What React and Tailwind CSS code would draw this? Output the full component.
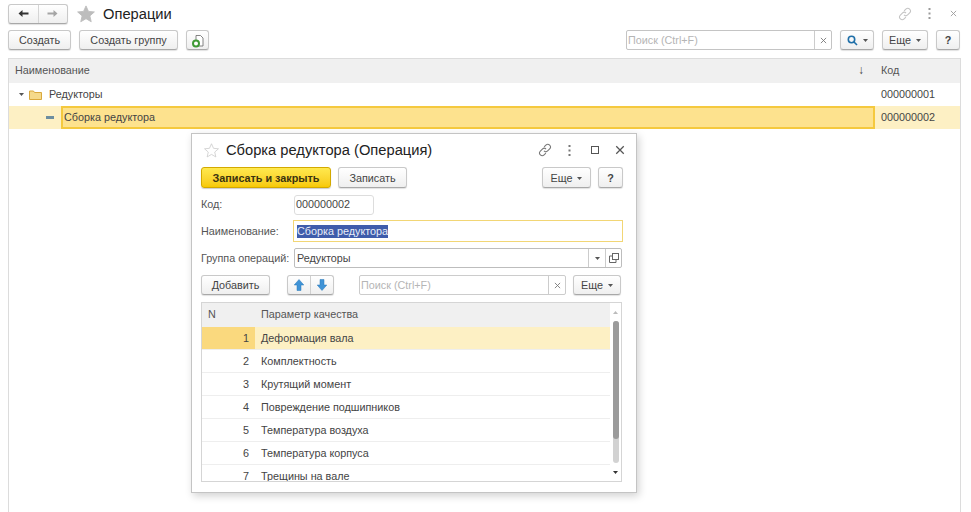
const FONT = "font-['Liberation_Sans',Arial,sans-serif]";

function Btn({ children, className = "" }) {
  return (
    <div className={`flex items-center justify-center rounded-[3px] border border-[#c9c9c9] border-b-[#a8a8a8] bg-gradient-to-b from-white to-[#efefef] pt-[1px] text-[10.8px] text-[#444] shadow-[0_1px_1px_rgba(0,0,0,0.12)] ${className}`}>
      {children}
    </div>
  );
}

const Caret = ({ className = "" }) => (
  <svg width="5" height="3" viewBox="0 0 5 3" className={className}><path d="M0 0h5L2.5 3z" fill="#555" /></svg>
);

const Close = ({ size = 7, color = "#777" }) => (
  <svg width={size} height={size} viewBox="0 0 8 8"><path d="M1 1l6 6M7 1L1 7" stroke={color} strokeWidth="1" fill="none" /></svg>
);

const LinkIcon = ({ color, size = 14 }) => (
  <svg width={size} height={size} viewBox="0 0 16 16" fill="none" stroke={color} strokeWidth="1.2">
    <path d="M7 4.5l2-2a3 3 0 0 1 4.3 4.3l-2.3 2.3a3 3 0 0 1-4.2 0" />
    <path d="M9 11.5l-2 2a3 3 0 0 1-4.3-4.3L5 6.9a3 3 0 0 1 4.2 0" />
  </svg>
);

const Dots = ({ color }) => (
  <svg width="3" height="11" viewBox="0 0 3 11"><rect x="0.5" y="0" width="2" height="2" fill={color} /><rect x="0.5" y="4.5" width="2" height="2" fill={color} /><rect x="0.5" y="9" width="2" height="2" fill={color} /></svg>
);

const Star = ({ size, fill, stroke }) => (
  <svg width={size} height={size} viewBox="0 0 20 20"><path d="M10 1l2.7 6.1 6.600.6-5 4.400 1.500 6.500L10 15.200l-5.800 3.400 1.500-6.500-5-4.400 6.600-.6z" fill={fill} stroke={stroke} strokeWidth="1" strokeLinejoin="round" /></svg>
);

const Arrow = ({ dir, color }) => (
  <svg width="11" height="9" viewBox="0 0 11 9">
    {dir === "left"
      ? <path d="M0.5 4.5L4.5 1v2.500h6v2h-6V8z" fill={color} />
      : <path d="M10.5 4.5L6.5 1v2.500h-6v2h6V8z" fill={color} />}
  </svg>
);

const BlueArrow = ({ down }) => (
  <svg width="10" height="12" viewBox="0 0 10 12" className={down ? "rotate-180" : ""}>
    <path d="M5 .5L9.8 6H7v5.500H3V6H.2z" fill="#3f93d6" stroke="#2a78b8" strokeWidth="0.5" />
  </svg>
);

const rows = ["Деформация вала", "Комплектность", "Крутящий момент", "Повреждение подшипников", "Температура воздуха", "Температура корпуса", "Трещины на вале"];

function Modal() {
  return (
    <div className="absolute left-[191px] top-[133px] flex h-[360px] w-[446px] flex-col border border-[#c4c4c4] bg-white pl-[9px] pr-[13px] shadow-[2px_3px_8px_rgba(0,0,0,0.18)]">
      <div className="flex h-[31px] items-center pt-[1px]">
        <div className="ml-[3px] flex w-[22px]"><Star size={15} fill="#fff" stroke="#c8c8c8" /></div>
        <span className="text-[14.7px] leading-none text-[#222]">Сборка редуктора (Операция)</span>
        <div className="ml-auto flex items-center">
          <LinkIcon color="#777" />
          <span className="ml-[16px]"><Dots color="#777" /></span>
          <span className="ml-[20px] block h-[8px] w-[8px] border border-[#555]" />
          <span className="ml-[16px] mr-[-2px]"><Close size={10} color="#555" /></span>
        </div>
      </div>
      <div className="mt-[2px] flex items-center">
        <div className="flex h-[21px] w-[130px] items-center justify-center rounded-[3px] border border-[#d3a900] bg-gradient-to-b from-[#ffe94d] to-[#f7c900] pt-[1px] text-[10.8px] font-bold text-[#3a3310] shadow-[0_1px_1px_rgba(0,0,0,0.2)]">Записать и закрыть</div>
        <Btn className="ml-[7px] h-[21px] w-[69px]">Записать</Btn>
        <Btn className="ml-auto h-[21px] w-[49px] gap-[5px]">Еще<Caret /></Btn>
        <Btn className="ml-[7px] h-[21px] w-[25px] font-bold">?</Btn>
      </div>
      <div className="mt-[7px] flex h-[20px] items-center">
        <span className="w-[93px] pb-[1px] text-[10.8px] text-[#555]">Код:</span>
        <div className="flex h-[20px] w-[80px] items-center rounded-[3px] border border-[#ddd] px-[1px] pb-[1px] text-[10.8px] text-[#444]">000000002</div>
      </div>
      <div className="mt-[5px] flex h-[22px] items-center">
        <span className="w-[92px] text-[10.8px] text-[#555]">Наименование:</span>
        <div className="flex h-[22px] flex-1 items-center border border-[#f2d675] px-[3px] text-[10.8px]">
          <span className="bg-[#3f5cab] leading-[13px] text-[#e8ecf8]">Сборка редуктора</span>
        </div>
      </div>
      <div className="mt-[6px] flex h-[20px] items-center">
        <span className="w-[93px] whitespace-nowrap text-[10.8px] text-[#555]">Группа операций:</span>
        <div className="mr-[1px] flex h-[20px] flex-1 items-center rounded-[2px] border border-[#bdbdbd] pl-[2px] text-[10.8px] text-[#444]">
          Редукторы
          <div className="ml-auto flex h-full w-[17px] items-center justify-center border-l border-[#ccc]"><Caret /></div>
          <div className="flex h-full w-[16px] items-center justify-center border-l border-[#ccc]">
            <svg width="10" height="10" viewBox="0 0 10 10" fill="none" stroke="#666"><rect x="3.5" y=".5" width="6" height="6" /><path d="M3 3H.5v6.500H7V7" /></svg>
          </div>
        </div>
      </div>
      <div className="mt-[7px] flex items-center">
        <Btn className="h-[20px] w-[69px]">Добавить</Btn>
        <div className="ml-[17px] flex h-[20px] w-[47px] rounded-[3px] border border-[#c9c9c9] border-b-[#a8a8a8] bg-gradient-to-b from-white to-[#efefef] shadow-[0_1px_1px_rgba(0,0,0,0.12)]">
          <div className="flex flex-1 items-center justify-center border-r border-[#d0d0d0]"><BlueArrow /></div>
          <div className="flex flex-1 items-center justify-center"><BlueArrow down /></div>
        </div>
        <div className="ml-[25px] flex h-[20px] w-[207px] items-center rounded-[2px] border border-[#ccc] pl-[1px] text-[10.8px] text-[#b5b5b5]">
          Поиск (Ctrl+F)
          <div className="ml-auto flex h-full w-[17px] items-center justify-center border-l border-[#ccc]"><Close /></div>
        </div>
        <Btn className="ml-[7px] h-[20px] w-[48px] gap-[5px]">Еще<Caret /></Btn>
      </div>
      <div className="mt-[7px] flex h-[180px] w-[421px] overflow-hidden border border-[#d5d5d5]">
        <div className="min-w-0 flex-1">
          <div className="flex h-[24px] items-center bg-[#f0f0f0] pb-[2px] text-[10.8px] text-[#555]">
            <span className="w-[53px] pl-[6px]">N</span>
            <span className="pl-[6px]">Параметр качества</span>
          </div>
          {rows.map((r, i) => (
            <div key={r} className={`flex h-[23px] shrink-0 items-center border-b border-[#eeeeee] text-[10.8px] text-[#444] ${i === 0 ? "bg-[#fdf0c4]" : ""}`}>
              <span className={`flex h-full w-[53px] items-center justify-end pr-[6px] ${i === 0 ? "bg-[#fad97e]" : ""}`}>{i + 1}</span>
              <span className="pl-[6px]">{r}</span>
            </div>
          ))}
        </div>
        <div className="flex w-[11px] flex-col items-center">
          <svg width="5" height="3" viewBox="0 0 5 3" className="mt-[8px]"><path d="M0 3h5L2.5 0z" fill="#bbb" /></svg>
          <div className="mt-[7px] h-[142px] w-[6px] rounded-[3px] bg-[#d2d2d2]">
            <div className="h-[118px] rounded-[3px] bg-[#9b9b9b]" />
          </div>
          <svg width="5" height="3" viewBox="0 0 5 3" className="mt-[8px]"><path d="M0 0h5L2.5 3z" fill="#333" /></svg>
        </div>
      </div>
    </div>
  );
}

export default function App() {
  return (
    <div className={`relative h-[512px] w-[971px] overflow-hidden bg-white ${FONT}`}>
      <div className="flex h-[30px] items-center pl-[8px] pr-[14px]">
        <div className="mt-[-3px] flex h-[20px] w-[60px] rounded-[3px] border border-[#c9c9c9] border-b-[#a8a8a8] bg-gradient-to-b from-white to-[#efefef] shadow-[0_1px_1px_rgba(0,0,0,0.12)]">
          <div className="flex flex-1 items-center justify-center border-r border-[#d5d5d5]"><Arrow dir="left" color="#333" /></div>
          <div className="flex flex-1 items-center justify-center"><Arrow dir="right" color="#a5a5a5" /></div>
        </div>
        <div className="ml-[9px] mt-[-3px] flex w-[26px]"><Star size={18} fill="#bdbdbd" stroke="#bdbdbd" /></div>
        <span className="mt-[-1px] text-[14.7px] leading-none text-[#222]">Операции</span>
        <div className="ml-auto mt-[-3px] flex items-center">
          <LinkIcon color="#c4c4c4" />
          <span className="ml-[16px]"><Dots color="#9a9a9a" /></span>
          <span className="ml-[19px]"><Close color="#9a9a9a" /></span>
        </div>
      </div>
      <div className="flex h-[28px] items-start pl-[8px] pr-[11px]">
        <Btn className="h-[20px] w-[63px]">Создать</Btn>
        <Btn className="ml-[8px] h-[20px] w-[99px]">Создать группу</Btn>
        <Btn className="ml-[8px] h-[20px] w-[23px]">
          <svg width="14" height="14" viewBox="0 0 14 14">
            <path d="M5 1.5h4.500L12 4v8H5z" fill="#fff" stroke="#666" strokeWidth="0.8" />
            <circle cx="5" cy="9.5" r="3" fill="#fff" stroke="#3f9a35" strokeWidth="2" />
          </svg>
        </Btn>
        <div className="ml-auto flex h-[20px] w-[206px] items-center rounded-[2px] border border-[#c4c4c4] pl-[1px] text-[10.8px] text-[#b5b5b5]">
          Поиск (Ctrl+F)
          <div className="ml-auto flex h-full w-[17px] items-center justify-center border-l border-[#ccc]"><Close /></div>
        </div>
        <Btn className="ml-[8px] h-[20px] w-[34px] gap-[5px]">
          <svg width="11" height="11" viewBox="0 0 11 11" fill="none" stroke="#1f6fa8" strokeWidth="1.6"><circle cx="4.5" cy="4.5" r="3.2" /><path d="M7 7l3 3" /></svg>
          <Caret />
        </Btn>
        <Btn className="ml-[8px] h-[20px] w-[46px] gap-[5px]">Еще<Caret /></Btn>
        <Btn className="ml-[8px] h-[20px] w-[24px] font-bold">?</Btn>
      </div>
      <div className="ml-[8px] mr-[10px] h-[470px] border border-[#dcdcdc]">
        <div className="flex h-[24px] items-center bg-[#f0f0f0] pb-[2px] text-[10.8px] text-[#555]">
          <span className="pl-[6px]">Наименование</span>
          <span className="ml-auto mr-[11px] text-[12px] text-[#444]">↓</span>
          <span className="w-[85px] pl-[6px]">Код</span>
        </div>
        <div className="flex h-[23px] items-center text-[10.8px] text-[#444]">
          <div className="flex flex-1 items-center pl-[10px]">
            <Caret />
            <svg width="13" height="11" viewBox="0 0 13 11" className="ml-[5px]"><path d="M.5 2h4l1 1.500h7V10.500H.5z" fill="#f5d98a" stroke="#d9a83d" strokeWidth="1" /></svg>
            <span className="ml-[7px]">Редукторы</span>
          </div>
          <span className="w-[85px] pl-[6px]">000000001</span>
        </div>
        <div className="flex h-[23px] items-center bg-[#fdf0c4] text-[10.8px] text-[#444]">
          <div className="flex h-full flex-1 items-center pl-[37px]">
            <span className="h-[3px] w-[8px] bg-[#6d8ea0]" />
            <div className="ml-[7px] flex h-full flex-1 items-center border-2 border-[#f5c93e] bg-[#fde28e] pl-[1px]">Сборка редуктора</div>
          </div>
          <span className="w-[85px] pl-[6px]">000000002</span>
        </div>
      </div>
      <Modal />
    </div>
  );
}
